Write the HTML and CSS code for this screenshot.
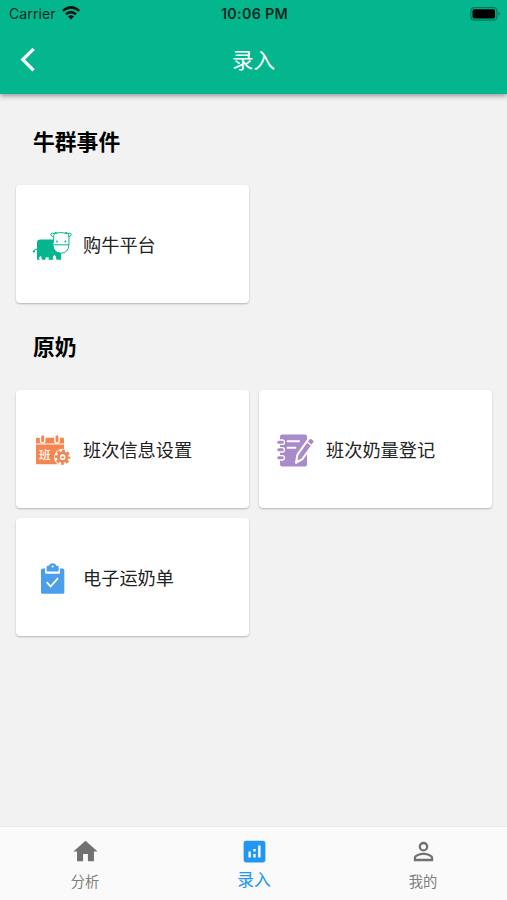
FILE: index.html
```html
<!DOCTYPE html>
<html lang="zh-CN">
<head>
<meta charset="utf-8">
<title>录入</title>
<link rel="stylesheet" href="styles.css">
</head>
<body>
<div class="app">
  <header class="top">
    <div class="status">
      <div class="carrier">
        <span>Carrier</span>
        <svg class="wifi" viewBox="0 0 18 14" fill="none" stroke="#05120e" stroke-width="2.5"><path d="M.8 4.900Q9-2.200 17.200 4.900M3.900 8.400Q9 3.900 14.100 8.400"/><path d="M6 10.400Q9 8 12 10.400L9 13.600z" fill="#05120e" stroke="none"/></svg>
      </div>
      <span class="time">10:06 PM</span>
      <svg class="battery" viewBox="0 0 31 14"><rect x=".9" y=".7" width="26" height="12.4" rx="3.4" fill="none" stroke="#04765a" stroke-width="1.2"/><rect x="2.5" y="2.3" width="22.6" height="9.2" rx="1.8" fill="#000"/><path d="M28.600 4.800q2.600 2.100 0 4.200z" fill="#04765a"/></svg>
    </div>
    <div class="bar">
      <svg class="back" viewBox="0 0 16 26" fill="none" stroke="#fff" stroke-width="3.3"><path d="M13.600 1.800 2.800 12.600 13.600 23.400"/></svg>
      <h1>录入</h1>
    </div>
  </header>

  <main>
    <h2>牛群事件</h2>
    <div class="grid">
      <div class="card">
        <svg class="icon" viewBox="21 13.5 120 120">
          <path d="M36 121V70q0-10 10-10h40l2 14q2 16 20 24v23H94l-1-9-5-6-5 7 3 8H70l2-7-10-1-1 8H51l-3-12-6 5 2 7z" fill="#04b68e"/>
          <path d="M37 89q-10-1-9 5" fill="none" stroke="#04b68e" stroke-width="3"/>
          <circle cx="27" cy="96" r="3.5" fill="#04b68e"/>
          <g fill="none" stroke="#04b68e" stroke-width="3"><path d="M88 42q18-6 40 0 4 4 4 12v21q-2 26-24 26T83 75q3-8 3-20 0-9 2-13z" fill="#fff"/><path d="M84 76h48M86 52q-8-1-9-8 4-5 12-2M130 52q8-1 9-8-4-5-12-2"/></g>
          <path d="M90 42q-3-5 4-5l2 5zM126 42q3-5-4-5l-2 5z" fill="#04b68e"/>
          <g fill="#04b68e"><circle cx="96" cy="66" r="2.7"/><circle cx="121" cy="66" r="2.7"/></g>
        </svg>
        <span>购牛平台</span>
      </div>
    </div>

    <h2>原奶</h2>
    <div class="grid">
      <div class="card">
        <svg class="icon" viewBox="21 13.5 120 120">
          <path d="M36 40h78q3 0 3 3v14H33V43q0-3 3-3zM33 60h84v56q0 3-3 3H36q-3 0-3-3z" fill="#f58551"/>
          <g fill="none" stroke-linecap="round"><path d="M53 37v12M96 37v12" stroke="#fff" stroke-width="17"/><path d="M53 37v12M96 37v12" stroke="#f58551" stroke-width="9"/></g>
          <text class="glyph" x="42" y="104">班</text>
          <circle cx="113" cy="98" r="25.500" fill="#fff"/>
          <circle cx="113" cy="98" r="13" fill="none" stroke="#f58551" stroke-width="9"/>
          <circle cx="113" cy="98" r="19" fill="none" stroke="#f58551" stroke-width="8" stroke-dasharray="8.500 6.420" stroke-dashoffset="4.250"/>
          <circle cx="113" cy="98" r="3.500" fill="#f58551"/>
        </svg>
        <span>班次信息设置</span>
      </div>
      <div class="card">
        <svg class="icon" viewBox="21 13.5 120 120">
          <rect x="36" y="30" width="81" height="96" rx="6" fill="#a98acb"/>
          <g stroke-linecap="round"><path d="M33 53h10M33 76h10M33 100h10" stroke="#fff" stroke-width="17"/><path d="M32 53h11M32 76h11M32 100h11" stroke="#a98acb" stroke-width="9"/></g>
          <path d="M59 50h34M59 70h23" stroke="#fff" stroke-width="6" stroke-linecap="round"/>
          <path d="M84 115l4-24 34-48q4-5 10-1l5 4q5 4 1 9l-35 49z" fill="#a98acb" stroke="#fff" stroke-width="6" stroke-linejoin="round"/>
          <path d="m116 52 16 12" stroke="#fff" stroke-width="4"/>
          <path d="m84 115 2-12 8 6z" fill="#fff"/>
        </svg>
        <span>班次奶量登记</span>
      </div>
      <div class="card">
        <svg class="icon" viewBox="21 13.5 120 120">
          <rect x="48" y="48" width="70" height="76" rx="5" fill="#4b9ee9"/>
          <path d="M60 47h45v12q0 5-5 5H65q-5 0-5-5z" fill="#fff"/>
          <path d="M65 43q0-3 3-3h4q2-8 11-8t11 8h4q3 0 3 3v11q0 3-3 3H68q-3 0-3-3z" fill="#4b9ee9"/>
          <circle cx="83" cy="42" r="3" fill="#fff"/>
          <path d="m65 89 12 13 22-25" fill="none" stroke="#fff" stroke-width="5.500"/>
        </svg>
        <span>电子运奶单</span>
      </div>
    </div>
  </main>

  <nav>
    <div class="tab">
      <svg viewBox="0 0 24 24" fill="#717171"><path d="M10 20v-6h4v6h5v-8h3L12 3 2 12h3v8z"/></svg>
      <span>分析</span>
    </div>
    <div class="tab active">
      <svg viewBox="0 0 24 24" fill="#2196f3"><path d="M19 3H5c-1.100 0-2 .9-2 2v14c0 1.100.9 2 2 2h14c1.100 0 2-.9 2-2V5c0-1.100-.9-2-2-2zM9 17H7v-5h2v5zm4 0h-2v-3h2v3zm0-5h-2v-2h2v2zm4 5h-2V7h2v10z"/></svg>
      <span>录入</span>
    </div>
    <div class="tab">
      <svg viewBox="0 0 24 24" fill="#717171"><path d="M12 5.900a2.100 2.100 0 1 1 0 4.200 2.100 2.100 0 0 1 0-4.200m0 9c2.970 0 6.100 1.460 6.100 2.100v1.100H5.900V17c0-.64 3.130-2.100 6.100-2.100M12 4a4 4 0 1 0 0 8 4 4 0 0 0 0-8zm0 9c-2.670 0-8 1.340-8 4v3h16v-3c0-2.660-5.330-4-8-4z"/></svg>
      <span>我的</span>
    </div>
  </nav>
</div>
</body>
</html>
```
FILE: styles.css
```css
* { box-sizing: border-box; }
body { margin: 0; font-family: "Noto Sans CJK SC", sans-serif; }
.app { height: 900px; display: flex; flex-direction: column; background: #f2f2f2; overflow: hidden; }

.top { height: 94px; background: #04b68e; box-shadow: 0 2px 5px rgba(0, 0, 0, .38); display: flex; flex-direction: column; z-index: 1; }
.status { height: 27px; padding: 0 6px 0 9px; display: grid; grid-template-columns: 1fr auto 1fr; align-items: center; font-family: Inter, sans-serif; color: #05291f; line-height: 27px; }
.carrier { display: flex; align-items: center; gap: 6px; font-size: 14px; letter-spacing: .1px; }
.wifi { width: 18px; height: 14px; margin-top: -2px; }
.time { font-size: 14.300px; font-weight: 600; letter-spacing: .3px; margin-right: 1px; }
.battery { width: 31px; height: 14px; justify-self: end; }
.bar { height: 65px; padding: 0 20px; display: grid; grid-template-columns: 16px 1fr 16px; align-items: center; }
.back { width: 16px; height: 26px; }
h1 { margin: 0; padding-bottom: 2px; color: #fff; text-align: center; font-size: 21.600px; font-weight: 400; line-height: 30px; }

main { flex: 1; padding: 31px 15px 0 16px; }
h2 { margin: 0 0 28px 17px; font-size: 21.800px; font-weight: 700; line-height: 32px; color: #000; }
.grid { display: grid; grid-template-columns: 233px 233px; gap: 10px; margin-bottom: 27px; }
.card { height: 118px; padding-left: 16px; display: flex; align-items: center; gap: 11px; background: #fff; border-radius: 4px; box-shadow: 0 1px 2px rgba(0, 0, 0, .26); font-size: 18.200px; color: #222; }
.icon { width: 40px; height: 40px; }
.glyph { font-size: 35px; font-weight: 500; fill: #fff; }

h2 + .grid { position: static; }

nav { height: 73px; background: #fafafa; display: grid; grid-template-columns: repeat(3, 1fr); box-shadow: 0 -1px 1px rgba(0, 0, 0, .03); }
.tab { display: flex; flex-direction: column; align-items: center; padding-top: 9.500px; padding-left: 1px; font-size: 14.300px; line-height: 22px; color: #808080; }
.tab svg { width: 29px; height: 29px; margin-bottom: 4px; }
.tab.active { font-size: 16.800px; color: #2196f3; }
.tab.active svg { margin-bottom: 2px; }
```
